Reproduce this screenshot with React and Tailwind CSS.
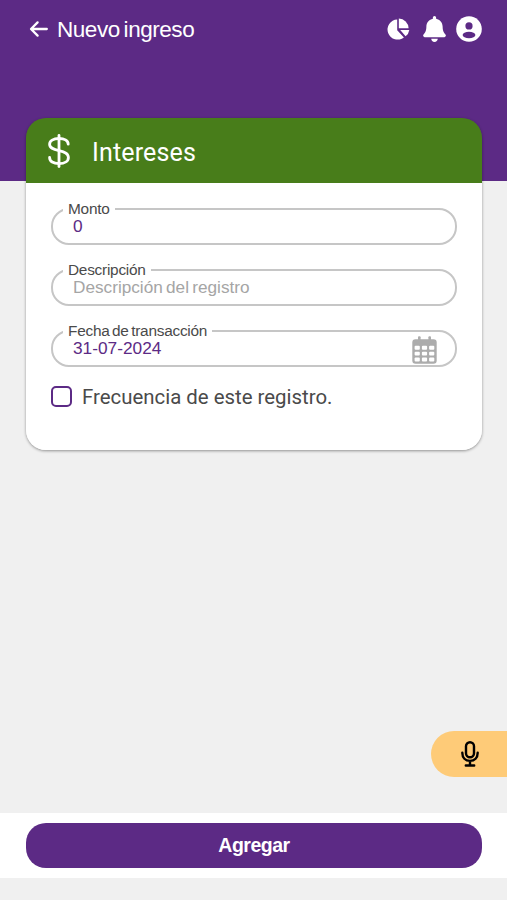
import { FaBell } from "react-icons/fa";

const fields = [
  { label: "Monto", value: "0" },
  { label: "Descripción", placeholder: "Descripción del registro" },
  { label: "Fecha de transacción", value: "31-07-2024", calendar: true },
];

function ArrowIcon() {
  return (
    <svg width="19" height="18" viewBox="0 0 19 18" fill="none" stroke="currentColor" strokeWidth="2.3" strokeLinecap="round" strokeLinejoin="round">
      <path d="M17.8 9H2.2M8.6 2.4L2 9L8.6 15.6" />
    </svg>
  );
}

function PieIcon() {
  return (
    <svg width="24" height="22" viewBox="0 0 24 22" fill="currentColor">
      <path d="M10.2 1.4A10.1 10.1 0 1 0 16.9 19.4L10.2 12.2Z" />
      <path d="M11.8 0.5A10.1 10.1 0 0 1 21.6 10.3H11.8Z" />
      <path d="M13.2 11.9H22.3A9.6 9.6 0 0 1 18.6 18.2Z" />
    </svg>
  );
}

function UserIcon() {
  return (
    <svg width="26" height="26" viewBox="0 0 26 26">
      <circle cx="13" cy="13" r="12.8" fill="currentColor" />
      <circle cx="13" cy="9.9" r="3.6" fill="#5c2a85" />
      <ellipse cx="13" cy="19" rx="6.4" ry="3.2" fill="#5c2a85" />
    </svg>
  );
}

function DollarIcon() {
  return (
    <svg width="22" height="34" viewBox="0 0 22 34" fill="none" stroke="currentColor" strokeWidth="2.8" strokeLinecap="round">
      <path d="M11 1.4V32.6" />
      <path d="M20.2 10.2C20.2 6.3 16.2 4.5 11 4.5C5.2 4.5 1.6 6.8 1.6 10.3C1.6 14 5 15.2 11 16.6C17 18 20.4 19.5 20.4 23.5C20.4 27.2 16.8 29.6 11 29.6C5.4 29.6 1.6 27.4 1.6 23.4" />
    </svg>
  );
}

function CalendarIcon() {
  return (
    <svg width="25" height="28" viewBox="0 0 25 28">
      <rect x="6" y="0.3" width="2.6" height="7" rx="1" fill="#acacac" />
      <rect x="16.4" y="0.3" width="2.6" height="7" rx="1" fill="#acacac" />
      <rect x="0.3" y="3.2" width="24.4" height="24.6" rx="3.2" fill="#acacac" />
      {[9.8, 15.7, 21.6].map((y) =>
        [2.6, 9.9, 17.1].map((x) => (
          <rect key={`${x}-${y}`} x={x} y={y} width="5.2" height="3.9" rx="1" fill="#fff" />
        ))
      )}
    </svg>
  );
}

function MicIcon() {
  return (
    <svg width="18" height="26" viewBox="0 0 18 26" fill="none" stroke="#000" strokeWidth="2.4" strokeLinecap="round">
      <rect x="5" y="1.3" width="8" height="15" rx="4" />
      <path d="M1.3 11.8C1.3 16.8 4.4 19.9 9 19.9C13.6 19.9 16.7 16.8 16.7 11.8M9 20V24.5M4.8 24.5H13.2" />
    </svg>
  );
}

function Field({ label, value, placeholder, calendar }) {
  return (
    <fieldset className="h-[45px] rounded-[18px] border-2 border-[#c6c6c6] pl-[10px]">
      <legend className="h-[18px] px-[5px] text-[15.4px] leading-[18px] tracking-[-0.25px] [word-spacing:-1.5px] text-[#4a4a4a]">
        {label}
      </legend>
      <div className="-mt-px flex h-[24px] items-start justify-between pl-[10px] pr-[18px]">
        {value ? (
          <span className="text-[17.3px] leading-[18px] text-[#5c2a85]">{value}</span>
        ) : (
          <span className="text-[17.2px] leading-[18px] [word-spacing:-1.5px] text-[#a5a5a5]">{placeholder}</span>
        )}
        {calendar && (
          <span className="-mt-[3px]">
            <CalendarIcon />
          </span>
        )}
      </div>
    </fieldset>
  );
}

export default function App() {
  return (
    <div className="flex h-[900px] w-full flex-col overflow-hidden bg-[#f0f0f0] font-['Liberation_Sans',Arial,sans-serif]">
      <header className="h-[181px] shrink-0 bg-[#5c2a85] text-white">
        <div className="flex h-[58px] items-center pl-[29px] pr-[25px]">
          <ArrowIcon />
          <h1 className="ml-[9px] mt-px text-[22.5px] leading-7 tracking-[-0.45px] [word-spacing:-2px]">Nuevo ingreso</h1>
          <div className="ml-auto flex items-center">
            <PieIcon />
            <FaBell className="ml-[12px] h-[26px] w-[23px]" />
            <span className="ml-[10px]">
              <UserIcon />
            </span>
          </div>
        </div>
      </header>

      <main className="relative z-10 -mt-[63px] flex flex-1 flex-col items-stretch">
        <section className="ml-[26px] mr-[25px] flex h-[332px] flex-col rounded-[20px] shadow-[0_1px_3px_rgba(0,0,0,0.4)]">
          <div className="flex h-[65px] shrink-0 items-center rounded-t-[20px] bg-[#487d1a] pl-[22px] text-white">
            <DollarIcon />
            <h2 className="ml-[22px] mt-[4px] font-['Roboto',sans-serif] text-[25px] tracking-[0.15px]">Intereses</h2>
          </div>
          <div className="flex-1 rounded-b-[20px] bg-white px-[25px] pt-[17px]">
            <div className="flex flex-col gap-4">
              {fields.map((field) => (
                <Field key={field.label} {...field} />
              ))}
            </div>
            <label className="mt-[17px] flex items-center">
              <span className="h-[21px] w-[21px] rounded-[5px] border-[2.5px] border-[#5c2a85]" />
              <span className="ml-[10px] mt-px font-['Roboto',sans-serif] text-[20.4px] leading-6 text-[#4a4a4a]">
                Frecuencia de este registro.
              </span>
            </label>
          </div>
        </section>

        <button className="mb-9 mt-auto flex h-[46px] w-[76px] items-center self-end rounded-l-full bg-[#fecb78] pl-[30px]">
          <MicIcon />
        </button>
      </main>

      <footer className="mb-[22px] flex h-[65px] shrink-0 items-center bg-white pl-[26px] pr-[25px]">
        <button className="h-[45px] w-full rounded-[20px] bg-[#5c2a85] pt-px text-[19.5px] font-bold tracking-[-0.5px] text-white">
          Agregar
        </button>
      </footer>
    </div>
  );
}
